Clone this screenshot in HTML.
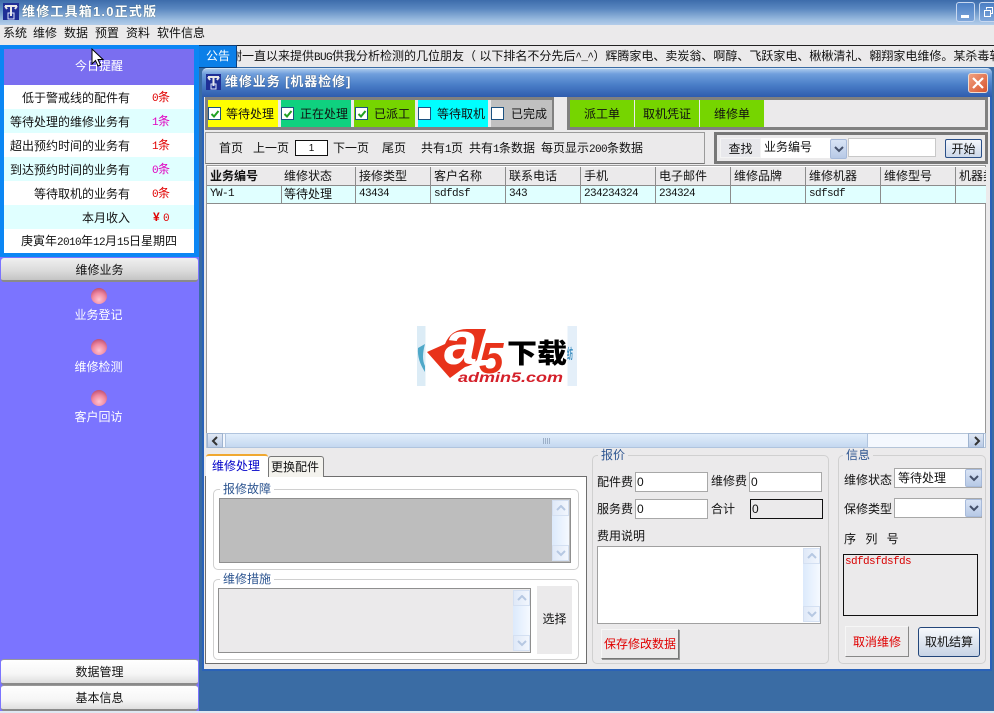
<!DOCTYPE html>
<html><head><meta charset="utf-8"><style>
html,body{margin:0;padding:0}
body{width:994px;height:713px;position:relative;overflow:hidden;background:#3a6ca4;font:12px/14px "Liberation Sans","Noto Sans CJK SC",sans-serif;color:#111}
div,input{box-sizing:border-box}
.a{position:absolute}
.t{position:absolute;white-space:nowrap;line-height:14px;height:14px}
.m{font-family:"Liberation Mono","Noto Sans CJK SC",monospace;font-size:11px;letter-spacing:-.6px}
.r{text-align:right}.c{text-align:center}
.row{position:absolute;left:4px;width:190px;height:24px}
.side{position:absolute;left:1px;width:197px;border-radius:3px;background:linear-gradient(#fff,#f6f6f6 60%,#dedede);border-bottom:2px solid #8a8a8a;text-align:center;line-height:24px}
.chk{position:absolute;top:7px;width:13px;height:13px;background:#fff;border:1px solid #1c5180}
.chk svg{position:absolute;left:1px;top:1px}
.fs{position:absolute;border:1px solid #d0d0d0;border-radius:5px}
.lg{position:absolute;top:-8px;left:6px;padding:0 3px;color:#2d5590;height:14px;line-height:14px}
.sb{position:absolute;width:17px;background:linear-gradient(90deg,#dceafc,#f5f9ff)}
.sb i{position:absolute;left:0;width:17px;height:16px;background:linear-gradient(90deg,#dfe9f8,#f2f6fd);border:1px solid #d4e0f2;box-sizing:border-box}
.sb i:first-child{top:0}.sb i:last-child{bottom:0}
.sb svg{position:absolute;left:3px;top:4px}
.inp{position:absolute;background:#fff;border:1px solid #a8a8a8;height:20px;padding-left:1px;line-height:19px}
.th{position:absolute;height:18px;line-height:18px;padding-left:3px;white-space:nowrap;overflow:hidden;width:75px;background:#ebeaeb;border-right:1px solid #8c8c8c}
.td{position:absolute;height:17px;line-height:17px;padding-left:3px;white-space:nowrap;overflow:hidden;width:75px;border-right:1px solid #8c8c8c}
.cb{position:absolute;width:17px;height:20px;background:linear-gradient(#d9e4f5,#b7c9e6);border:1px solid #a7bada;border-radius:2px}
.ball{position:absolute;left:91px;width:16px;height:16px;border-radius:50%;background:radial-gradient(circle at 50% 72%,#ffc4d2 0,#f08aa2 45%,#c25475 80%,#8f4a78 100%)}
</style></head><body>

<!-- title -->
<div class="a" style="left:0;top:0;width:994px;height:25px;background:linear-gradient(#3d6cab 0,#5a87c0 35%,#9bbce0 80%,#b3cdea)"></div>
<svg class="a" style="left:3px;top:3px" width="16" height="17"><rect width="16" height="17" fill="#1f2f96"/><path d="M2 3h12M2 3l2 3M14 3l-2 3M8 4v9" stroke="#e8e8e8" stroke-width="2" fill="none"/><rect x="5" y="10" width="6" height="6" fill="none" stroke="#dfe7ff"/></svg>
<div class="t" style="left:22px;top:4px;color:#fff;font-weight:bold;font-size:13px;letter-spacing:1.2px;height:16px;line-height:16px;text-shadow:0 0 1px #355">维修工具箱1.0正式版</div>
<div class="a" style="left:956px;top:2px;width:19px;height:20px;border:1px solid #c8d8f0;border-radius:3px;background:linear-gradient(#4b7fc4,#7ea6da)"><div class="a" style="left:4px;top:12px;width:8px;height:3px;background:#fff"></div></div>
<div class="a" style="left:979px;top:2px;width:19px;height:20px;border:1px solid #c8d8f0;border-radius:3px;background:linear-gradient(#4b7fc4,#7ea6da)"><svg class="a" style="left:3px;top:3px" width="11" height="12"><path d="M3.500 3.500V1.500h6v6h-2M1.500 4.500h6v6h-6z" stroke="#fff" fill="none"/></svg></div>

<!-- menu -->
<div class="a" style="left:0;top:25px;width:994px;height:20px;background:#ebeaeb"></div>
<div class="t" style="left:3px;top:26px">系统</div><div class="t" style="left:33px;top:26px">维修</div><div class="t" style="left:64px;top:26px">数据</div><div class="t" style="left:95px;top:26px">预置</div><div class="t" style="left:126px;top:26px">资料</div><div class="t" style="left:157px;top:26px">软件信息</div>

<!-- left sidebar -->
<div class="a" style="left:0;top:45px;width:199px;height:666px;background:#7b74ff"></div>
<div class="a" style="left:0;top:45px;width:199px;height:212px;background:#0b86f4"></div>
<div class="a" style="left:4px;top:49px;width:190px;height:36px;background:#7a6ef0"></div>
<div class="t c" style="left:4px;width:190px;top:59px;color:#fff">今日提醒</div>
<div class="row" style="top:85px;background:#fff"></div>
<div class="row" style="top:109px;background:#e0ffff"></div>
<div class="row" style="top:133px;background:#fff"></div>
<div class="row" style="top:157px;background:#e0ffff"></div>
<div class="row" style="top:181px;background:#fff"></div>
<div class="row" style="top:205px;background:#e0ffff"></div>
<div class="row" style="top:229px;background:#fff"></div>
<div class="t r" style="left:4px;width:126px;top:91px">低于警戒线的配件有</div><div class="t" style="left:152px;top:90px;color:#e00000"><span class="m">0</span>条</div>
<div class="t r" style="left:4px;width:126px;top:115px">等待处理的维修业务有</div><div class="t" style="left:152px;top:114px;color:#e000c0"><span class="m">1</span>条</div>
<div class="t r" style="left:4px;width:126px;top:139px">超出预约时间的业务有</div><div class="t" style="left:152px;top:138px;color:#e00000"><span class="m">1</span>条</div>
<div class="t r" style="left:4px;width:126px;top:163px">到达预约时间的业务有</div><div class="t" style="left:152px;top:162px;color:#e000c0"><span class="m">0</span>条</div>
<div class="t r" style="left:4px;width:126px;top:187px">等待取机的业务有</div><div class="t" style="left:152px;top:186px;color:#e00000"><span class="m">0</span>条</div>
<div class="t r" style="left:4px;width:126px;top:211px">本月收入</div><div class="t" style="left:153px;top:210px;color:#e00000"><b>¥</b> <span class="m">0</span></div>
<div class="t c" style="left:4px;width:190px;top:234px">庚寅年<span class="m">2010</span>年<span class="m">12</span>月<span class="m">15</span>日星期四</div>
<div class="side" style="top:258px;height:24px;background:linear-gradient(#f0f0f0,#dcdcdc 55%,#c4c4c4)">维修业务</div>
<div class="ball" style="top:288px"></div><div class="t c" style="left:0;width:197px;top:308px;color:#fff">业务登记</div>
<div class="ball" style="top:339px"></div><div class="t c" style="left:0;width:197px;top:360px;color:#fff">维修检测</div>
<div class="ball" style="top:390px"></div><div class="t c" style="left:0;width:197px;top:410px;color:#fff">客户回访</div>
<div class="side" style="top:659px;height:26px;border-top:1px solid #999">数据管理</div>
<div class="side" style="top:685px;height:26px;border-top:1px solid #999">基本信息</div>

<!-- notice -->
<div class="a" style="left:199px;top:45px;width:795px;height:22px;background:#ebeaeb;border-top:1px solid #222;overflow:hidden"></div>
<div class="a" style="left:199px;top:45px;width:38px;height:23px;background:#0b7fe8;border:1px solid #0d3f7c;border-left:none;z-index:3"></div>
<div class="t" style="left:206px;top:49px;color:#fff;z-index:4">公告</div>
<div class="a" style="left:237px;top:46px;width:757px;height:20px;overflow:hidden"><div class="t" style="left:-7px;top:3px">谢一直以来提供<span class="m">BUG</span>供我分析检测的几位朋友（ 以下排名不分先后<span class="m">^_^</span>）辉腾家电、卖炭翁、啊醇、飞跃家电、楸楸清礼、翱翔家电维修。某杀毒软件</div></div>

<!-- window -->
<div class="a" style="left:202px;top:68px;width:790px;height:603px;background:#ebeaeb;border:2px solid #2a62b8;border-top:none;border-radius:5px 5px 0 0"></div>
<div class="a" style="left:202px;top:68px;width:790px;height:29px;border-radius:5px 5px 0 0;background:linear-gradient(#a8c8ec,#6f9edc 18%,#4b7fc8 55%,#2e5cae);border-top:1px solid #d4e4f6"></div>
<svg class="a" style="left:206px;top:74px" width="15" height="16"><rect width="15" height="16" fill="#1f2f96"/><path d="M2 3h11M2 3l2 3M13 3l-2 3M7.500 4v8" stroke="#e8e8e8" stroke-width="2" fill="none"/><rect x="5" y="10" width="5" height="5" fill="none" stroke="#dfe7ff"/></svg>
<div class="t" style="left:225px;top:75px;color:#fff;font-weight:bold;font-size:13px;text-shadow:0 0 1px #234;letter-spacing:.9px">维修业务 [机器检修]</div>
<div class="a" style="left:968px;top:73px;width:20px;height:20px;border-radius:3px;border:1px solid #f0dccf;background:linear-gradient(135deg,#f0a080,#d8552e)"><svg class="a" style="left:3px;top:3px" width="12" height="12"><path d="M1 1l10 10M11 1L1 11" stroke="#fff" stroke-width="2.200"/></svg></div>

<!-- toolbar 1 -->
<div class="a" style="left:205px;top:97px;width:349px;height:33px;border:3px solid #808080;background:#ebeaeb"></div>
<div class="a" style="left:208px;top:100px;width:70px;height:27px;background:#ffff00"><div class="chk" style="left:0"><svg width="10" height="10"><path d="M1.500 5l2.500 2.500L8.500 2" stroke="#21a121" stroke-width="2" fill="none"/></svg></div></div><div class="t" style="left:226px;top:107px">等待处理</div>
<div class="a" style="left:281px;top:100px;width:70px;height:27px;background:#0fd17f"><div class="chk" style="left:0"><svg width="10" height="10"><path d="M1.500 5l2.500 2.500L8.500 2" stroke="#21a121" stroke-width="2" fill="none"/></svg></div></div><div class="t" style="left:300px;top:107px">正在处理</div>
<div class="a" style="left:354px;top:100px;width:61px;height:27px;background:#76d500"><div class="chk" style="left:1px"><svg width="10" height="10"><path d="M1.500 5l2.500 2.500L8.500 2" stroke="#21a121" stroke-width="2" fill="none"/></svg></div></div><div class="t" style="left:374px;top:107px">已派工</div>
<div class="a" style="left:418px;top:100px;width:70px;height:27px;background:#00ffff"><div class="chk" style="left:0"></div></div><div class="t" style="left:437px;top:107px">等待取机</div>
<div class="a" style="left:491px;top:100px;width:61px;height:27px;background:#c0c0c0"><div class="chk" style="left:0"></div></div><div class="t" style="left:511px;top:107px">已完成</div>

<!-- toolbar 2 -->
<div class="a" style="left:567px;top:97px;width:421px;height:33px;border:3px solid #808080;background:#ebeaeb"></div>
<div class="a c" style="left:570px;top:100px;width:64px;height:27px;background:#76d500;line-height:28px">派工单</div>
<div class="a c" style="left:635px;top:100px;width:64px;height:27px;background:#76d500;line-height:28px">取机凭证</div>
<div class="a c" style="left:700px;top:100px;width:64px;height:27px;background:#76d500;line-height:28px">维修单</div>

<!-- pager -->
<div class="a" style="left:205px;top:132px;width:500px;height:32px;border:1px solid #9a9a9a;border-bottom-color:#777"></div>
<div class="t" style="left:219px;top:141px">首页</div><div class="t" style="left:253px;top:141px">上一页</div>
<div class="a c" style="left:295px;top:140px;width:33px;height:16px;background:#fff;border:1px solid #111;line-height:15px;font-size:10px">1</div>
<div class="t" style="left:333px;top:141px">下一页</div><div class="t" style="left:382px;top:141px">尾页</div>
<div class="t" style="left:421px;top:141px">共有<span class="m">1</span>页</div><div class="t" style="left:469px;top:141px">共有<span class="m">1</span>条数据</div><div class="t" style="left:541px;top:141px">每页显示<span class="m">200</span>条数据</div>

<!-- search -->
<div class="a" style="left:714px;top:132px;width:274px;height:32px;border:3px solid #777"></div>
<div class="a c" style="left:720px;top:138px;width:41px;height:20px;background:#e8e8ec;border:1px solid #f4f4f4;line-height:21px">查找</div>
<div class="a" style="left:761px;top:138px;width:70px;height:20px;background:#fff;line-height:19px;padding-left:3px">业务编号</div>
<div class="cb" style="left:830px;top:139px"><svg class="a" style="left:3px;top:6px" width="10" height="7"><path d="M1 1l4 4 4-4" stroke="#44506a" stroke-width="2" fill="none"/></svg></div>
<div class="a" style="left:848px;top:138px;width:88px;height:19px;background:#fff;border:1px solid #c8c8c8"></div>
<div class="a c" style="left:945px;top:139px;width:37px;height:19px;border:1px solid #2a4f88;border-radius:2px;background:linear-gradient(#f4f6fa,#ccd8ea);line-height:19px">开始</div>

<!-- table -->
<div class="a" style="left:206px;top:165px;width:780px;height:268px;background:#fff;border:1px solid #999;border-width:1px 1px 0 1px"></div>
<div class="a" style="left:207px;top:185px;width:779px;height:1px;background:#8c8c8c"></div>
<div class="a" style="left:207px;top:186px;width:779px;height:18px;background:#e0ffff;border-bottom:1px solid #8c8c8c"></div>
<div class="a" style="left:207px;top:166px;width:779px;height:38px;overflow:hidden">
<div class="th" style="left:0;top:1px;font-weight:bold">业务编号</div>
<div class="th" style="left:74px;top:1px">维修状态</div>
<div class="th" style="left:149px;top:1px">接修类型</div>
<div class="th" style="left:224px;top:1px">客户名称</div>
<div class="th" style="left:299px;top:1px">联系电话</div>
<div class="th" style="left:374px;top:1px">手机</div>
<div class="th" style="left:449px;top:1px">电子邮件</div>
<div class="th" style="left:524px;top:1px">维修品牌</div>
<div class="th" style="left:599px;top:1px">维修机器</div>
<div class="th" style="left:674px;top:1px">维修型号</div>
<div class="th" style="left:749px;top:1px;border:none">机器类型</div>
<div class="td m" style="left:0;top:20px">YW-1</div>
<div class="td" style="left:74px;top:20px">等待处理</div>
<div class="td m" style="left:149px;top:20px">43434</div>
<div class="td m" style="left:224px;top:20px">sdfdsf</div>
<div class="td m" style="left:299px;top:20px">343</div>
<div class="td m" style="left:374px;top:20px">234234324</div>
<div class="td m" style="left:449px;top:20px">234324</div>
<div class="td" style="left:524px;top:20px"></div>
<div class="td m" style="left:599px;top:20px">sdfsdf</div>
<div class="td" style="left:674px;top:20px"></div>
</div>

<!-- watermark logo -->
<div class="a" style="left:417px;top:326px;width:160px;height:60px;background:linear-gradient(90deg,#dcecf6 0,#dcecf6 8px,#fff 9px,#fff 150px,#e4eff9 151px)"></div>
<svg class="a" style="left:417px;top:326px" width="160" height="60">
<path d="M1 22Q0 34 8 46V40Q4 32 8 18z" fill="#4fa8c8"/>
<path d="M10 26L28 18Q34 3 50 3L69 3 66 12 60 34Q56 39 48 41L33 52z" fill="#e8321a"/>
<text x="27" y="38" font-family="Liberation Sans" font-weight="bold" font-style="italic" font-size="60" fill="#fff">a</text>
<text x="62" y="47" font-family="Liberation Sans" font-weight="bold" font-style="italic" font-size="44" fill="#e8321a">5</text>
<text x="90" y="37" font-family="Noto Sans CJK SC" font-weight="900" font-size="27" fill="#000" textLength="60" lengthAdjust="spacingAndGlyphs">下载</text>
<text x="150" y="33" font-family="Noto Sans CJK SC" font-weight="bold" font-size="14" fill="#3f8fc0" textLength="6" lengthAdjust="spacingAndGlyphs">纺</text>
<text x="41" y="56" font-family="Liberation Sans" font-weight="bold" font-style="italic" font-size="14" fill="#d4202a" textLength="105" lengthAdjust="spacingAndGlyphs">admin5.com</text>
</svg>

<!-- hscroll -->
<div class="a" style="left:206px;top:433px;width:780px;height:15px;background:#f4f8fe;border:1px solid #b4c4d8"></div>
<div class="a" style="left:225px;top:433px;width:643px;height:15px;background:linear-gradient(#e2eefb,#c4d8f0);border:1px solid #b0c4de"><div class="a" style="left:317px;top:4px;width:7px;height:6px;background:repeating-linear-gradient(90deg,#9db0c8 0 1px,transparent 1px 2px)"></div></div>
<div class="a" style="left:207px;top:433px;width:16px;height:15px;background:linear-gradient(#e0e8f4,#b9cbe6);border:1px solid #9fb4d0"><svg class="a" style="left:3px;top:2px" width="9" height="10"><path d="M6 1L2 5l4 4" stroke="#333" stroke-width="2" fill="none"/></svg></div>
<div class="a" style="left:968px;top:433px;width:16px;height:15px;background:linear-gradient(#e0e8f4,#b9cbe6);border:1px solid #9fb4d0"><svg class="a" style="left:4px;top:2px" width="9" height="10"><path d="M2 1l4 4-4 4" stroke="#333" stroke-width="2" fill="none"/></svg></div>

<!-- tabs -->
<div class="a" style="left:205px;top:476px;width:382px;height:188px;background:#fff;border:1px solid #6e6e6e"></div>
<div class="a" style="left:268px;top:456px;width:56px;height:21px;background:#f4f3ee;border:1px solid #777;border-bottom:none;border-radius:3px 3px 0 0"></div>
<div class="t" style="left:271px;top:460px">更换配件</div>
<div class="a" style="left:206px;top:454px;width:62px;height:23px;background:#fff;border-top:2px solid #f0a830;border-radius:3px 3px 0 0"></div>
<div class="t" style="left:212px;top:459px;color:#0000c8">维修处理</div>

<div class="fs" style="left:213px;top:489px;width:366px;height:81px"><div class="lg" style="background:#fff">报修故障</div></div>
<div class="a" style="left:219px;top:498px;width:352px;height:65px;background:#bdbdbd;border:1px solid #8f8f8f"></div>
<div class="sb" style="left:552px;top:500px;height:61px"><i><svg width="10" height="7"><path d="M1 5l4-4 4 4" stroke="#b6c8e2" stroke-width="2" fill="none"/></svg></i><i><svg width="10" height="7"><path d="M1 1l4 4 4-4" stroke="#b6c8e2" stroke-width="2" fill="none"/></svg></i></div>

<div class="fs" style="left:213px;top:579px;width:366px;height:81px"><div class="lg" style="background:#fff">维修措施</div></div>
<div class="a" style="left:218px;top:588px;width:313px;height:65px;background:#ebeaeb;border:1px solid #8f8f8f"></div>
<div class="sb" style="left:513px;top:590px;height:61px"><i><svg width="10" height="7"><path d="M1 5l4-4 4 4" stroke="#b6c8e2" stroke-width="2" fill="none"/></svg></i><i><svg width="10" height="7"><path d="M1 1l4 4 4-4" stroke="#b6c8e2" stroke-width="2" fill="none"/></svg></i></div>
<div class="a c" style="left:537px;top:586px;width:35px;height:68px;background:#ebeaeb;line-height:67px">选择</div>

<!-- quote -->
<div class="fs" style="left:592px;top:455px;width:237px;height:209px"><div class="lg" style="top:-8px;left:5px;background:#ebeaeb">报价</div></div>
<div class="t" style="left:597px;top:475px">配件费</div><div class="inp" style="left:635px;top:472px;width:73px">0</div>
<div class="t" style="left:711px;top:474px">维修费</div><div class="inp" style="left:749px;top:472px;width:73px">0</div>
<div class="t" style="left:597px;top:502px">服务费</div><div class="inp" style="left:635px;top:499px;width:73px">0</div>
<div class="t" style="left:711px;top:502px">合计</div><div class="inp" style="left:750px;top:499px;width:73px;background:#ebeaeb;border-color:#111">0</div>
<div class="t" style="left:597px;top:529px">费用说明</div>
<div class="a" style="left:597px;top:546px;width:224px;height:78px;background:#fff;border:1px solid #a0a0a0"></div>
<div class="sb" style="left:803px;top:548px;height:74px"><i><svg width="10" height="7"><path d="M1 5l4-4 4 4" stroke="#b6c8e2" stroke-width="2" fill="none"/></svg></i><i><svg width="10" height="7"><path d="M1 1l4 4 4-4" stroke="#b6c8e2" stroke-width="2" fill="none"/></svg></i></div>
<div class="a c" style="left:601px;top:629px;width:78px;height:30px;background:#ebeaeb;border:1px solid;border-color:#f6f6f6 #777 #777 #f6f6f6;box-shadow:1px 1px 0 #999;color:#e00000;line-height:29px">保存修改数据</div>

<!-- info -->
<div class="fs" style="left:838px;top:455px;width:148px;height:209px"><div class="lg" style="left:4px;background:#ebeaeb">信息</div></div>
<div class="t" style="left:844px;top:473px">维修状态</div>
<div class="inp" style="left:894px;top:468px;width:88px;padding-left:3px;line-height:18px">等待处理</div>
<div class="cb" style="left:965px;top:469px;height:18px"><svg class="a" style="left:3px;top:5px" width="10" height="7"><path d="M1 1l4 4 4-4" stroke="#44506a" stroke-width="2" fill="none"/></svg></div>
<div class="t" style="left:844px;top:502px">保修类型</div>
<div class="inp" style="left:894px;top:498px;width:88px"></div>
<div class="cb" style="left:965px;top:499px;height:18px"><svg class="a" style="left:3px;top:5px" width="10" height="7"><path d="M1 1l4 4 4-4" stroke="#44506a" stroke-width="2" fill="none"/></svg></div>
<div class="t" style="left:844px;top:532px;word-spacing:6px">序 列 号</div>
<div class="a m" style="left:843px;top:554px;width:135px;height:62px;border:1px solid #111;color:#d80000;padding:1px;line-height:13px">sdfdsfdsfds</div>
<div class="a c" style="left:845px;top:626px;width:64px;height:31px;background:#ebeaeb;border:1px solid;border-color:#f6f6f6 #888 #888 #f6f6f6;color:#e00000;line-height:30px">取消维修</div>
<div class="a c" style="left:918px;top:627px;width:62px;height:30px;border:1px solid #23467a;border-radius:3px;background:linear-gradient(#f6f8fb,#c8d4e6);line-height:29px">取机结算</div>

<div class="a" style="left:0;top:711px;width:994px;height:2px;background:#dfe8f2"></div>

<!-- cursor -->
<svg class="a" style="left:91px;top:48px;z-index:9" width="14" height="20"><path d="M1 1v15l3.500-3.500 2.500 5.500 2.500-1-2.500-5.500h5z" fill="#fff" stroke="#000"/></svg>
</body></html>
